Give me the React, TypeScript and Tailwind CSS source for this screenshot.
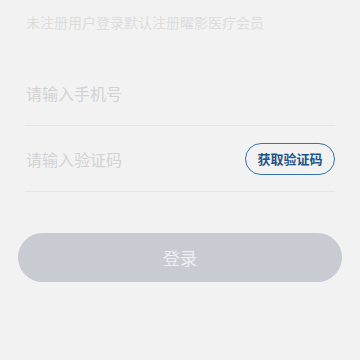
export default function App() {
  const font = { fontFamily: '"Noto Sans CJK SC", "Noto Sans", sans-serif' };
  return (
    <div className="w-[360px] h-[360px] bg-[#f2f2f2] flex flex-col" style={font}>
      <div className="pt-3 px-[26px] text-[14px] leading-[20px] text-[#dcdcdd]">
        未注册用户登录默认注册曜影医疗会员
      </div>
      <div className="mt-[28px] mx-[25px] flex flex-col">
        <div className="h-[66px] flex items-center border-b border-[#e6e6e6] text-[16px] text-[#d2d2d4] pl-[1px]">
          请输入手机号
        </div>
        <div className="h-[66px] flex items-center justify-between border-b border-[#e6e6e6] pl-[1px]">
          <span className="text-[16px] text-[#d2d2d4]">请输入验证码</span>
          <span className="w-[90px] h-[32px] rounded-full border-[1.5px] border-[#3574ad] flex items-center justify-center text-[13px] font-bold text-[#1f5289]">
            获取验证码
          </span>
        </div>
      </div>
      <div className="mt-[41px] mx-[18px] h-[49px] rounded-full bg-[#c8cbd2] flex items-center justify-center text-[17px] text-[#eef0f2]">
        登录
      </div>
    </div>
  );
}
